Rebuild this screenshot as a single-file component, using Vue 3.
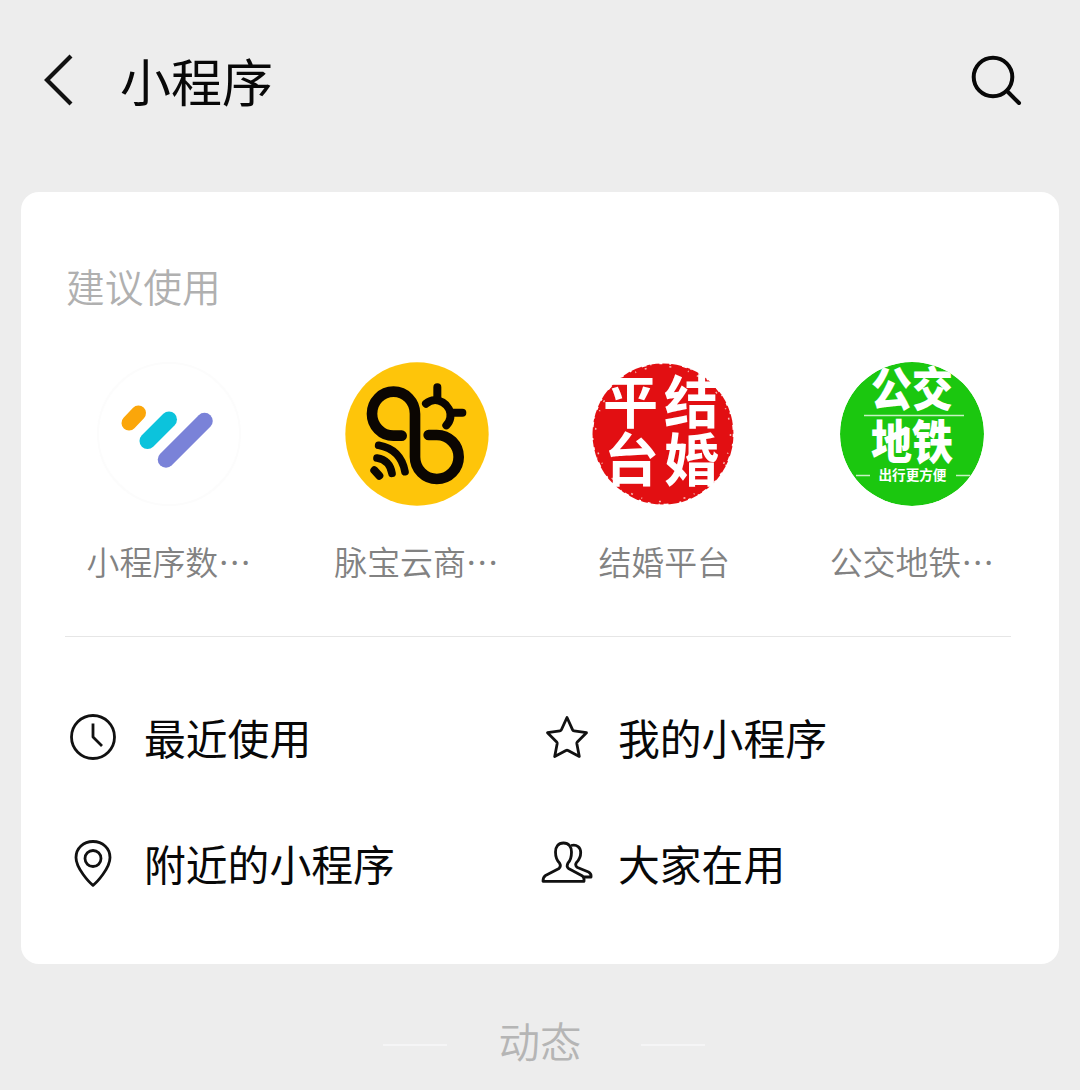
<script setup>
const apps = [
  { id: 'data', name: '小程序数…' },
  { id: 'bee', name: '脉宝云商…' },
  { id: 'wedding', name: '结婚平台' },
  { id: 'metro', name: '公交地铁…' },
];

const entries = [
  { id: 'recent', name: '最近使用' },
  { id: 'mine', name: '我的小程序' },
  { id: 'nearby', name: '附近的小程序' },
  { id: 'popular', name: '大家在用' },
];
</script>

<template>
  <div class="page">
    <header class="header">
      <svg class="back" viewBox="0 0 32 54">
        <path d="M29 3 5 27 29 51" />
      </svg>
      <h1 class="title">小程序</h1>
      <svg class="search" viewBox="0 0 54 54">
        <circle cx="24" cy="24" r="19.3" />
        <path d="M38 38 50 50" />
      </svg>
    </header>

    <main class="card">
      <h2 class="subtitle">建议使用</h2>
      <div class="apps">
        <div v-for="app in apps" :key="app.id" class="app">
          <svg v-if="app.id === 'data'" class="logo" viewBox="0 0 144 144">
            <circle cx="72" cy="72" r="71" fill="#fff" stroke="#fcfcfc" stroke-width="2" />
            <g fill="none" stroke-linecap="round">
              <path d="M32 61 41.500 51" stroke="#fba60a" stroke-width="15" />
              <path d="M50.500 79 72 57.500" stroke="#0cc3dc" stroke-width="16" />
              <path d="M69 97.500 107.500 59" stroke="#7a82d8" stroke-width="16.500" />
            </g>
          </svg>
          <svg v-else-if="app.id === 'bee'" class="logo" viewBox="77 37 432 432">
            <circle cx="293" cy="253" r="215" fill="#fec50a" />
            <g fill="none" stroke="#0b0602" stroke-linecap="round">
              <path
                d="M247 258H222A64.500 66 0 0 1 158 192A64.500 66 0 0 1 287 192V322A65.500 66 0 0 0 418 322A65.500 66 0 0 0 352 256H328"
                stroke-width="32"
              />
              <path d="M320 162C352 135 398 165 393 204Q391 217 381 227" stroke-width="24" />
              <path d="M354 145V113M396 189H429" stroke-width="24" />
              <path d="M178 287Q244 299 257 366M173 325Q211 331 218 371" stroke-width="23" />
              <path d="M165 362 180 378" stroke-width="24" />
            </g>
          </svg>
          <svg v-else-if="app.id === 'wedding'" class="logo" viewBox="0 0 144 144">
            <circle cx="71" cy="72" r="70.500" fill="#e20f12" />
            <circle class="speckle" cx="71" cy="72" r="70.500" />
            <circle class="speckle inner" cx="71" cy="72" r="67.500" />
            <g class="seal" transform="scale(1 1.04)">
              <text x="11" y="58.500">平</text>
              <text x="72" y="58.500">结</text>
              <text x="12" y="114.500">台</text>
              <text x="72" y="114.500">婚</text>
            </g>
          </svg>
          <svg v-else class="logo" viewBox="0 0 144 144">
            <defs>
              <clipPath id="metro-clip"><circle cx="72" cy="72" r="72" /></clipPath>
            </defs>
            <g clip-path="url(#metro-clip)">
              <circle cx="72" cy="72" r="72" fill="#1bc70f" />
              <g transform="scale(1 1.14)">
                <text class="metro" x="31" y="39">公交</text>
                <text class="metro" x="31" y="85">地铁</text>
              </g>
              <path d="M24 53.500H124" stroke="#c6f3c2" stroke-width="1.500" />
              <path d="M16 113.500H30M116 113.500H130" stroke="#c6f3c2" stroke-width="1.500" />
              <text class="slogan" x="38.500" y="118">出行更方便</text>
            </g>
          </svg>
          <span class="name">{{ app.name }}</span>
        </div>
      </div>

      <nav class="entries">
        <a v-for="entry in entries" :key="entry.id" class="entry">
          <svg class="icon" viewBox="0 0 52 52">
            <template v-if="entry.id === 'recent'">
              <circle cx="26" cy="26" r="21.500" />
              <path d="M26 12.500V26L35 35" />
            </template>
            <path
              v-else-if="entry.id === 'mine'"
              d="M26 6.500 31.600 18.800Q32 19.700 33 19.800L45.500 21.700 36.300 31Q35.700 31.600 35.800 32.500L38.300 45.500 27 39.500Q26 39 25 39.500L13.700 45.500 16.200 32.500Q16.300 31.600 15.700 31L6.500 21.700 19 19.800Q20 19.700 20.400 18.800Z"
            />
            <template v-else-if="entry.id === 'nearby'">
              <path d="M26 48.300C22.500 45.500 9 31.500 9 20.500C9 11 16.500 4.500 26 4.500S43 11 43 20.500C43 31.500 29.500 45.500 26 48.300Z" />
              <circle cx="26" cy="21.500" r="8" />
            </template>
            <template v-else>
              <path
                d="M22.500 6C17 6 14.500 10 14.500 15C14.500 20 16 23.500 18.500 26Q20.500 29 18 31.500L4.500 38.500Q2 40 2 44.300H43Q43.500 41 41.500 39L27.500 31.500Q25 29.500 27 26C29.500 23.500 30.500 20 30.500 15C30.500 10 28 6 22.500 6Z"
              />
              <path d="M30 8.500C36 7 39.700 10.500 39.700 15.500C39.700 19.500 38 23 35.500 25.500Q33.500 28.500 36.500 30.500L47.500 35Q50.500 36.500 50 40H43" />
            </template>
          </svg>
          <span class="label">{{ entry.name }}</span>
        </a>
      </nav>
    </main>

    <footer class="footer">
      <i class="dash"></i>
      <span>动态</span>
      <i class="dash"></i>
    </footer>
  </div>
</template>

<style>
body {
  margin: 0;
  background: #ededed;
}
</style>

<style scoped>
.page {
  box-sizing: border-box;
  width: 1080px;
  height: 1090px;
  padding: 0 21px;
  overflow: hidden;
  background: #ededed;
  color: #080808;
  font-family: 'Noto Sans CJK SC', sans-serif;
}
.header {
  display: flex;
  align-items: center;
  box-sizing: border-box;
  height: 192px;
  padding: 0 36px 32px 21px;
}
.back {
  width: 32px;
  height: 54px;
  fill: none;
  stroke: #111;
  stroke-width: 4.2;
}
.title {
  flex: 1;
  margin: 0 0 1px 46px;
  font-size: 51px;
  font-weight: 400;
  line-height: 64px;
}
.search {
  width: 54px;
  height: 54px;
  fill: none;
  stroke: #080808;
  stroke-width: 4;
  stroke-linecap: round;
}
.card {
  box-sizing: border-box;
  height: 772px;
  padding: 65px 48px 0 44px;
  border-radius: 18px;
  background: #fff;
}
.subtitle {
  margin: 0 0 0 1px;
  color: #b0b0b0;
  font-size: 38.700px;
  font-weight: 350;
  line-height: 56px;
}
.apps {
  display: grid;
  grid-template-columns: repeat(4, 247.700px);
  height: 323px;
  margin-left: -20px;
}
.app {
  display: flex;
  flex-direction: column;
  align-items: center;
  padding-top: 49px;
}
.logo {
  width: 144px;
  height: 144px;
}
.name {
  margin: 31px 0 0;
  color: #828282;
  font-size: 32.900px;
  font-weight: 350;
  line-height: 48px;
  white-space: nowrap;
}
.seal {
  fill: #fff;
  font-size: 55px;
  font-weight: 700;
}
.speckle {
  fill: none;
  stroke: #fff;
  stroke-width: 1.500;
  stroke-dasharray: 3 7 2 11 5 4 1 8;
}
.speckle.inner {
  stroke: #f8b7b0;
  stroke-dasharray: 2 17 1 9 2 23;
}
.metro {
  fill: #fff;
  font-size: 41px;
  font-weight: 900;
}
.slogan {
  fill: #fff;
  font-size: 13.600px;
  font-weight: 700;
}
.entries {
  display: grid;
  grid-template-columns: 474px 1fr;
  grid-auto-rows: 126px;
  padding-top: 37px;
  border-top: 1px solid #e6e6e6;
}
.entry {
  display: flex;
  align-items: center;
  font-size: 41.800px;
  line-height: 60px;
}
.icon {
  width: 52px;
  height: 52px;
  margin: 0 26px 0 2px;
  fill: none;
  stroke: #111;
  stroke-width: 2.800;
  stroke-linejoin: round;
}
.label {
  margin-left: -1px;
}
.footer {
  display: flex;
  align-items: center;
  justify-content: center;
  padding-top: 46px;
  color: #b5b5b5;
  font-size: 41.500px;
  font-weight: 350;
  line-height: 60px;
}
.dash {
  width: 64px;
  height: 2px;
  margin: 9px 51px 0 0;
  background: #f5f5f6;
}
.dash:last-child {
  margin: 9px -8px 0 59px;
}
</style>
